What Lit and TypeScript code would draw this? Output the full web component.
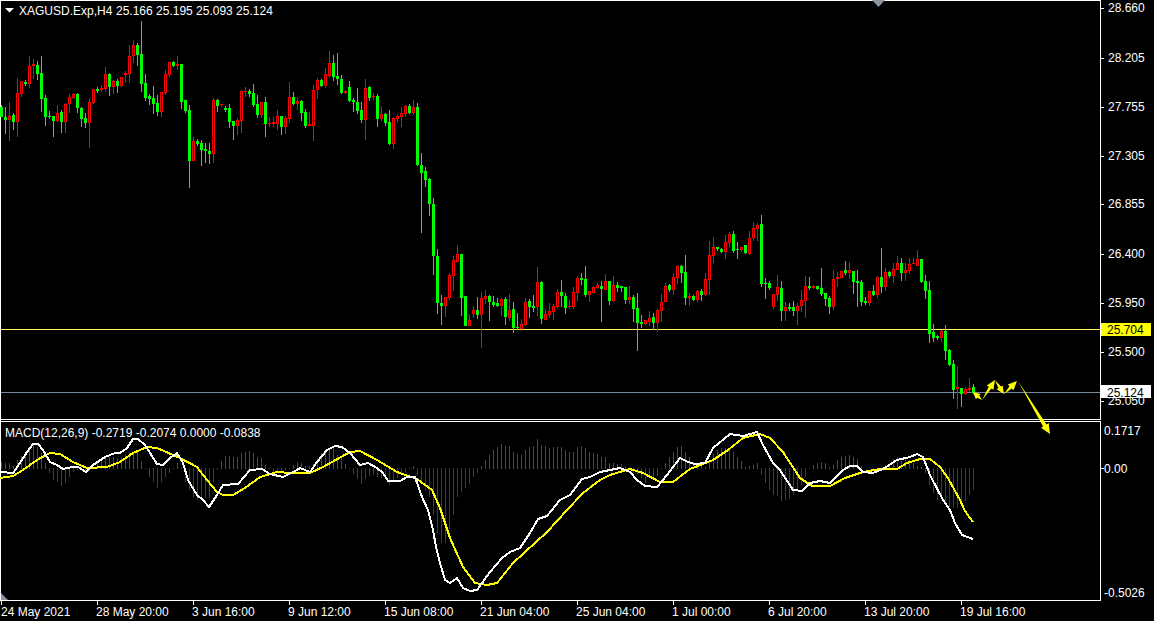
import { LitElement, html, css, svg } from "lit";
import { customElement } from "lit/decorators.js";

// [isBull, bodyTop, bodyBottom, wickHigh, wickLow]; bar i is centred on pixel 1 + 4 * i
type C = [number, number, number, number, number];
const G = 0, R = 1;
const raw: [number, number, number, number, number][] = [
[G,107,117,105,117],[G,117,120,107,134],[R,116,120,102,141],[G,115,122,113,130],[R,93,122,78,137],
[R,81,94,81,97],[G,82,84,80,86],[R,66,84,56,88],[R,64,66,59,79],[G,65,74,61,80],
[G,73,99,56,112],[G,98,117,95,126],[G,116,117,111,119],[G,116,121,116,137],[R,113,121,105,122],
[G,112,122,110,133],[R,104,122,103,133],[R,97,104,94,113],[R,94,98,93,99],[G,94,108,93,113],
[G,108,119,107,127],[G,118,123,113,128],[R,102,123,98,148],[R,89,103,89,104],[G,89,91,87,93],
[R,88,90,85,92],[R,74,89,67,92],[G,74,87,73,96],[R,81,87,80,94],[G,81,86,79,93],
[R,77,86,77,87],[R,73,75,71,83],[R,56,74,45,83],[R,45,56,40,63],[G,45,55,43,66],
[G,54,84,21,92],[G,83,98,74,101],[G,96,99,94,105],[G,98,104,86,114],[G,103,112,95,116],
[R,92,112,92,117],[R,74,93,70,95],[R,62,75,62,77],[G,62,66,61,67],[R,64,66,56,70],
[G,64,102,64,109],[G,100,111,100,113],[G,110,161,105,188],[R,141,161,137,161],[G,141,144,139,146],
[G,143,150,140,166],[G,149,151,143,163],[G,151,154,143,164],[R,100,154,98,163],[G,100,106,99,112],
[R,104,105,104,107],[G,108,110,106,112],[G,108,122,104,128],[G,121,126,121,140],[R,120,126,118,135],
[R,91,121,90,133],[R,91,92,87,97],[G,91,94,89,97],[G,93,105,84,107],[G,104,115,95,118],
[R,102,115,102,118],[G,102,124,97,137],[R,123,124,117,127],[R,122,124,117,127],[R,116,124,110,130],
[G,116,127,116,135],[R,118,127,116,134],[R,97,119,82,123],[G,97,104,92,105],[R,101,104,97,110],
[G,101,113,100,121],[G,112,126,109,128],[R,124,126,112,126],[R,90,126,85,141],[R,80,90,78,99],
[G,80,86,79,87],[R,74,86,68,88],[R,63,76,51,78],[G,63,77,55,81],[G,76,79,53,85],
[G,79,93,75,94],[R,91,93,90,94],[G,87,101,81,102],[G,100,102,98,112],[G,102,111,88,114],
[G,110,120,102,123],[R,88,120,79,140],[G,87,98,86,101],[R,96,97,93,100],[G,96,119,94,127],
[R,114,119,106,121],[G,114,123,113,126],[G,122,144,110,145],[R,118,144,117,149],[R,116,119,114,122],
[R,113,117,107,127],[R,106,114,105,117],[G,106,113,104,114],[R,107,113,100,115],[G,107,165,103,166],
[G,165,173,153,233],[G,171,180,167,187],[G,179,204,178,216],[G,204,256,198,275],[G,256,303,249,314],
[G,303,306,295,325],[R,297,306,297,317],[R,275,298,273,300],[R,260,276,256,291],[R,254,262,245,262],
[G,254,298,254,316],[G,296,326,296,326],[R,320,326,314,326],[R,310,314,306,318],[G,310,315,297,319],
[R,298,315,292,348],[R,296,299,290,304],[G,296,302,295,321],[G,302,305,296,307],[G,303,306,298,307],
[R,299,306,298,316],[G,299,317,297,325],[R,310,318,294,321],[G,309,328,302,333],[G,327,328,313,330],
[R,324,329,319,331],[R,302,325,298,326],[G,301,307,299,318],[G,306,308,295,312],[R,282,307,267,316],
[G,282,319,281,324],[R,314,320,309,320],[R,311,315,303,318],[R,306,312,304,320],[R,292,307,289,308],
[G,292,296,280,307],[G,296,308,293,314],[R,306,307,300,309],[R,292,307,287,309],[R,278,293,276,301],
[G,278,280,273,285],[G,279,295,266,297],[R,291,295,291,302],[R,287,293,286,293],[R,285,288,283,289],
[G,286,289,281,322],[R,281,290,274,290],[G,281,301,281,305],[R,285,301,276,302],[G,285,288,282,292],
[G,286,288,286,292],[G,287,300,287,304],[R,297,300,286,304],[G,297,309,295,322],[G,308,323,293,351],
[G,322,324,315,328],[R,320,324,320,325],[R,318,322,311,326],[G,317,323,313,330],[R,310,323,309,332],
[R,302,311,294,322],[R,286,302,283,302],[G,285,290,284,292],[R,277,290,273,295],[R,266,278,265,284],
[G,266,273,265,283],[G,272,298,255,305],[R,296,298,293,306],[G,296,300,295,301],[R,291,300,290,302],
[G,291,295,289,301],[R,279,295,273,296],[R,255,280,241,295],[R,247,256,237,263],[G,247,249,247,251],
[G,249,252,248,253],[R,242,252,235,259],[R,234,243,232,248],[G,234,251,231,253],[G,249,250,242,259],
[R,247,250,247,252],[G,245,253,245,254],[R,238,254,231,255],[R,228,238,222,241],[R,225,229,223,241],
[G,224,284,215,287],[G,283,284,278,299],[G,283,288,281,290],[R,294,307,294,309],[R,287,295,275,301],
[G,288,311,281,321],[R,307,311,302,321],[G,307,309,303,311],[G,307,311,301,316],[R,306,311,303,325],
[R,300,306,290,312],[R,286,301,276,318],[G,286,288,277,290],[R,286,288,285,289],[G,286,289,286,290],
[G,288,294,268,296],[G,293,299,293,306],[G,298,307,296,314],[R,279,307,270,310],[R,277,279,272,287],
[R,271,278,271,278],[G,270,273,261,275],[R,270,273,262,279],[G,271,282,271,294],[G,281,283,270,307],
[G,282,302,280,306],[G,301,303,297,305],[R,291,303,291,306],[G,291,295,285,296],[R,277,295,276,298],
[G,277,287,248,293],[R,272,287,268,291],[G,272,276,271,278],[R,269,276,263,283],[R,263,270,256,270],
[G,263,273,258,281],[R,270,273,263,281],[R,264,271,258,274],[R,263,264,258,264],[R,259,266,250,266],
[G,259,282,259,283],[G,281,291,275,299],[G,290,334,281,343],[G,332,338,324,342],[G,336,338,335,340],
[R,331,338,330,342],[G,331,351,325,360],[G,350,365,349,366],[G,364,390,360,399],[R,387,389,366,409],
[G,388,394,388,407],[R,389,394,387,395],[R,388,390,378,392],[G,387,393,384,394],
];

// histogram end y per bar, zero line at 468
const hist = [462,463,463,466,460,456,453,448,445,447,453,463,473,480,482,486,483,477,472,470,470,473,469,467,463,460,457,457,457,458,457,455,453,453,452,461,469,477,482,488,482,477,473,469,463,469,482,490,497,500,500,498,498,482,470,461,456,456,457,457,453,452,451,453,457,458,465,469,472,472,472,470,469,465,462,
463,466,466,464,458,453,452,450,448,455,458,464,469,474,479,484,479,476,475,477,478,479,485,481,478,473,472,469,466,475,482,490,497,515,533,543,543,530,515,497,492,488,484,477,473,466,460,455,450,447,444,446,446,452,454,455,450,447,446,439,445,446,448,447,447,447,450,452,452,447,446,448,452,453,454,
457,457,463,463,464,464,467,467,473,475,478,483,477,478,476,469,463,457,452,447,446,452,457,462,463,464,467,460,454,450,448,448,450,452,457,461,467,466,465,463,475,483,490,495,496,501,500,499,495,491,485,477,469,465,463,462,463,467,465,460,457,456,455,457,459,466,468,468,468,468,469,465,463,459,457,460,459,460,463,466,467,473,485,493,500,500,505,507,508,508,505,501,495,490];

const white = "0,472 13,473 20,463 27,452 33,444 38,444 43,450 50,462 57,465 63,469 72,467 78,467 86,472 93,465 105,457 115,453 120,453 127,448 133,439 138,439 145,445 157,464 163,465 170,458 177,453 183,463 188,480 197,495 203,500 209,507 217,495 223,485 238,484 250,470 262,469 270,474 283,477 297,470 300,468 310,472 317,462 327,450 335,446 342,447 350,453 360,465 368,463 377,468 383,473 388,481 400,481 407,477 415,477 422,497 428,510 433,530 436,547 440,563 445,580 450,583 457,578 463,588 470,591 477,590 482,583 490,572 502,558 510,552 520,548 530,533 538,519 547,516 560,500 570,495 582,479 590,477 600,472 610,470 620,468 630,472 637,480 645,486 657,487 667,475 680,458 688,462 695,464 705,463 713,448 730,434 743,436 757,432 763,445 773,463 780,470 793,490 802,491 810,483 820,481 830,483 843,470 850,466 857,466 863,472 873,473 883,469 897,460 910,457 917,454 923,457 930,475 943,500 950,510 955,523 962,535 973,539";
const yellow = "0,478 13,476 23,470 37,460 50,453 60,454 73,462 87,468 107,467 120,462 133,453 147,447 157,448 180,458 197,467 207,480 217,492 223,495 233,495 245,488 260,477 277,472 290,473 300,473 310,473 323,467 350,452 360,451 377,460 397,472 417,479 432,490 440,508 450,538 463,567 475,583 487,585 497,583 513,563 547,532 567,510 583,493 600,480 610,475 630,469 643,473 660,482 673,482 690,469 713,460 728,450 743,438 760,434 770,438 783,452 800,478 812,486 830,486 845,478 863,472 880,469 897,469 907,463 920,459 930,459 940,467 948,478 960,500 965,511 973,522";

const priceLabels: [string, number][] = [["28.660",8],["28.205",58],["27.755",107],["27.305",156],["26.855",204],["26.400",254],["25.950",303],["25.500",352],["25.050",401]];
const timeLabels = ["24 May 2021","28 May 20:00","3 Jun 16:00","9 Jun 12:00","15 Jun 08:00","21 Jun 04:00","25 Jun 04:00","1 Jul 00:00","6 Jul 20:00","13 Jul 20:00","19 Jul 16:00"];

function arrow(x1: number, y1: number, x2: number, y2: number, hw = 4, hl = 9, sw = 1.6): string {
  const d = Math.hypot(x2 - x1, y2 - y1), ux = (x2 - x1) / d, uy = (y2 - y1) / d, px = -uy, py = ux;
  const bx = x2 - ux * hl, by = y2 - uy * hl;
  const p = [
    [x1, y1],
    [bx + px * sw, by + py * sw],
    [bx + px * hw, by + py * hw],
    [x2, y2],
    [bx - px * hw, by - py * hw],
    [bx - px * sw, by - py * sw],
  ];
  return p.map((q) => q[0].toFixed(1) + "," + q[1].toFixed(1)).join(" ");
}

@customElement("app-root")
export class AppRoot extends LitElement {
  static styles = css`
    :host { display: block; width: 1154px; height: 621px; background: #000; overflow: hidden; }
    svg { display: block; }
    .crisp { shape-rendering: crispEdges; }
    .frame { fill: none; stroke: #fff; stroke-width: 1; }
    .red { fill: #ff0000; }
    .green { fill: #00ff00; }
    .hollow { fill: #000; }
    .hup { fill: #b5173b; }
    .hdown { fill: #0b620b; }
    .macd { fill: none; stroke: #fff; stroke-width: 2; stroke-linejoin: round; }
    .signal { fill: none; stroke: #ffff00; stroke-width: 2; stroke-linejoin: round; }
    .hline { fill: #ffff66; }
    .bid { fill: #778899; }
    .w { fill: #fff; }
    .marker { fill: #8a94a0; }
    .draw { fill: #ffff00; }
    .yellowbox { fill: #ffff00; }
    text {
      font-family: "Liberation Sans", Arial, sans-serif;
      font-size: 12px;
      fill: #fff;
      dominant-baseline: alphabetic;
    }
    text.dark { fill: #000; }
  `;

  render() {
    const candles = raw.map(([k, t, b, h, l], i) => {
      const cx = 1 + 4 * i;
      const cls = k === R ? "red" : "green";
      return svg`<rect class=${cls} x=${cx} y=${h} width="1" height=${Math.max(1, l - h)}></rect>
        <rect class=${cls} x=${cx - 1} y=${t} width="3" height=${Math.max(1, b - t)}></rect>
        ${k === R && b - t > 2 ? svg`<rect class="hollow" x=${cx} y=${t + 1} width="1" height=${b - t - 2}></rect>` : ""}`;
    });
    const bars = hist.map((y, i) => {
      if (y === 468) return "";
      const cx = 1 + 4 * i;
      return y < 468
        ? svg`<rect class="hup" x=${cx} y=${y} width="1" height=${469 - y}></rect>`
        : svg`<rect class="hdown" x=${cx} y="468" width="1" height=${y - 468}></rect>`;
    });
    return html`<svg width="1154" height="621" viewBox="0 0 1154 621">
      <g class="crisp">
        <rect class="w" x="0" y="0" width="1101" height="1"></rect>
        <rect class="w" x="0" y="0" width="1" height="601"></rect>
        <rect class="w" x="1100" y="0" width="1" height="420"></rect>
        <rect class="w" x="0" y="419" width="1101" height="1"></rect>
        <rect class="w" x="0" y="421" width="1101" height="1"></rect>
        <rect class="w" x="1100" y="421" width="1" height="180"></rect>
        <rect class="w" x="0" y="600" width="1101" height="1"></rect>
        <rect class="hline" x="1" y="329" width="1099" height="1"></rect>
        <rect class="bid" x="1" y="392" width="1099" height="1"></rect>
        ${candles}
        ${bars}
        <polyline class="signal" points=${yellow}></polyline>
        <polyline class="macd" points=${white}></polyline>
        ${priceLabels.map(([, y]) => svg`<rect class="w" x="1101" y=${y} width="3" height="1"></rect>`)}
        <rect class="w" x="1101" y="468" width="3" height="1"></rect>
        ${timeLabels.map((_, i) => svg`<rect class="w" x=${1 + 96 * i} y="601" width="1" height="4"></rect>`)}
      </g>
      <polygon class="draw" points=${arrow(982, 400, 973, 392, 3.5, 7)}></polygon>
      <polygon class="draw" points=${arrow(982, 400, 995, 380)}></polygon>
      <polygon class="draw" points=${arrow(995, 380, 1004, 394, 3.5, 8)}></polygon>
      <polygon class="draw" points=${arrow(1004, 394, 1017, 381)}></polygon>
      <polygon class="draw" points=${arrow(1018, 381, 1050, 434, 4.5, 10, 2)}></polygon>

      <polygon class="w" points="5,8 14,8 9.5,12.5"></polygon>
      <polygon class="marker" points="872,0 885,0 878.5,7"></polygon>
      <polygon class="marker" points="1,593 8,600 1,600"></polygon>

      <text x="19" y="15">XAGUSD.Exp,H4</text>
      <text x="116" y="15">25.166 25.195 25.093 25.124</text>
      <text x="5" y="437">MACD(12,26,9) -0.2719 -0.2074 0.0000 -0.0838</text>

      ${priceLabels.map(([t, y]) => svg`<text x="1108" y=${y + 4}>${t}</text>`)}
      <rect class="yellowbox crisp" x="1101" y="323" width="50" height="13"></rect>
      <text class="dark" x="1107" y="334">25.704</text>
      <rect class="w crisp" x="1101" y="385" width="50" height="13"></rect>
      <text class="dark" x="1107" y="397">25.124</text>

      <text x="1104" y="435">0.1717</text>
      <text x="1104" y="473">0.00</text>
      <text x="1104" y="597">-0.5026</text>

      ${timeLabels.map((t, i) => svg`<text x=${i === 0 ? 1 : 96 * i} y="616">${t}</text>`)}
    </svg>`;
  }
}
